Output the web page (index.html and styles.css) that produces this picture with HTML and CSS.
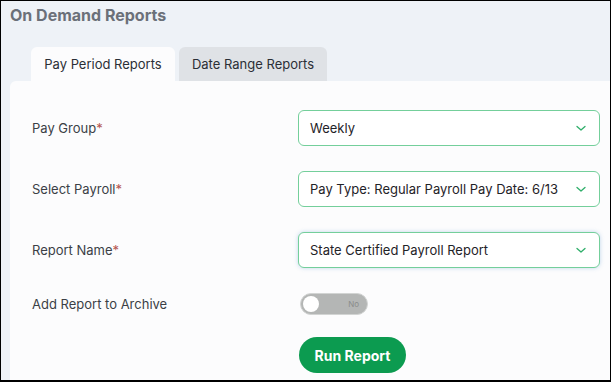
FILE: index.html
```html
<!DOCTYPE html>
<html>
<head>
<meta charset="utf-8">
<link rel="stylesheet" href="styles.css">
</head>
<body>
<div class="frame">
  <h1 class="title">On Demand Reports</h1>
  <div class="tabs">
    <div class="tab active">Pay Period Reports</div>
    <div class="tab">Date Range Reports</div>
  </div>
  <div class="card">
    <div class="row">
      <div class="label">Pay Group<span class="req">*</span></div>
      <div class="select"><span>Weekly</span><svg class="chev" viewBox="0 0 12 12" width="12" height="12"><path d="M2 4.5 L6 8 L10 4.5" fill="none" stroke="#2fae6a" stroke-width="1.3" stroke-linecap="round" stroke-linejoin="round"/></svg></div>
    </div>
    <div class="row">
      <div class="label">Select Payroll<span class="req">*</span></div>
      <div class="select"><span>Pay Type: Regular Payroll Pay Date: 6/13</span><svg class="chev" viewBox="0 0 12 12" width="12" height="12"><path d="M2 4.5 L6 8 L10 4.5" fill="none" stroke="#2fae6a" stroke-width="1.3" stroke-linecap="round" stroke-linejoin="round"/></svg></div>
    </div>
    <div class="row">
      <div class="label">Report Name<span class="req">*</span></div>
      <div class="select focus"><span>State Certified Payroll Report</span><svg class="chev" viewBox="0 0 12 12" width="12" height="12"><path d="M2 4.5 L6 8 L10 4.5" fill="none" stroke="#2fae6a" stroke-width="1.3" stroke-linecap="round" stroke-linejoin="round"/></svg></div>
    </div>
    <div class="row short">
      <div class="label">Add Report to Archive</div>
      <div class="toggle"><span class="knob"></span><span class="no">No</span></div>
    </div>
    <div class="row btnrow">
      <div></div>
      <div><button class="run">Run Report</button></div>
    </div>
  </div>
</div>
</body>
</html>
```
FILE: styles.css
```css
* { box-sizing: border-box; }
html, body { margin: 0; padding: 0; }
body { font-family: Inter, "Noto Sans", sans-serif; }
.frame {
  width: 611px;
  height: 382px;
  border: 1px solid #000;
  border-bottom-width: 2px;
  background: #eef2f7;
  display: flex;
  flex-direction: column;
  padding-left: 9px;
  overflow: hidden;
}
.title {
  margin: 4px 0 0 0;
  font-size: 16px;
  line-height: 20px;
  font-weight: 700;
  color: #6b7079;
}
.tabs {
  display: flex;
  gap: 4px;
  margin: 22px 0 0 21px;
}
.tab {
  height: 34px;
  display: flex;
  align-items: center;
  justify-content: center;
  white-space: nowrap;
  font-size: 13px;
  color: #2b2f36;
  background: #dfe2e6;
  border-radius: 6px 6px 0 0;
  width: 148px;
}
.tab.active {
  background: #fcfcfd;
  width: 144px;
}
.card {
  flex: 1;
  background: #fcfcfd;
  padding: 29px 10px 0 22px;
  border-top-left-radius: 6px;
}
.row {
  display: grid;
  grid-template-columns: 266px 302px;
  align-items: center;
  height: 36px;
  margin-bottom: 25px;
}
.row.short { height: 22px; margin-bottom: 22px; margin-top: 6px; }
.label {
  font-size: 13px;
  color: #3b3f46;
}
.req { color: #b5554f; }
.select {
  height: 36px;
  border: 1px solid #74cf9b;
  border-radius: 6px;
  display: flex;
  align-items: center;
  justify-content: space-between;
  padding: 0 12px 0 11px;
  font-size: 13px;
  color: #1f2328;
  background: #fff;
}
.select.focus { box-shadow: 0 0 4px rgba(80, 140, 200, 0.35); }
.chev { display: block; }
.toggle {
  margin-left: 2px;
  width: 68px;
  height: 22px;
  border-radius: 11px;
  background: #b4b6b5;
  border: 1px solid #d2d4d3;
  position: relative;
  display: flex;
  align-items: center;
}
.knob {
  position: absolute;
  left: 2px;
  top: 2px;
  width: 16px;
  height: 16px;
  border-radius: 50%;
  background: #fff;
}
.no {
  margin-left: auto;
  margin-right: 8px;
  font-size: 8px;
  color: #8a8c8b;
}
.btnrow { height: 36px; }
.run {
  margin-left: 1px;
  width: 107px;
  height: 36px;
  border: none;
  border-radius: 18px;
  background: #0c9b50;
  color: #fff;
  font-family: Inter, sans-serif;
  font-weight: 700;
  font-size: 14px;
}
```
